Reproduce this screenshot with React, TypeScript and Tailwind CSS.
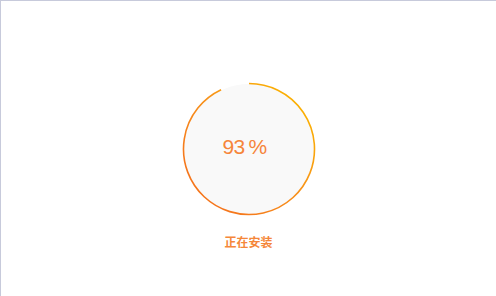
import React from 'react';

const progress = 93;

const ProgressRing: React.FC<{ value: number }> = ({ value }) => {
  const c = 67;
  const r = 65.5;
  const angle = (value / 100) * Math.PI * 2;
  const endX = c + r * Math.sin(angle);
  const endY = c - r * Math.cos(angle);
  const large = value > 50 ? 1 : 0;

  return (
    <svg width="134" height="134" viewBox="0 0 134 134">
      <defs>
        <linearGradient id="ring" gradientUnits="userSpaceOnUse" x1="125" y1="20" x2="30" y2="115">
          <stop offset="0" stopColor="#fbb300" />
          <stop offset="0.5" stopColor="#f7921a" />
          <stop offset="1" stopColor="#f5761c" />
        </linearGradient>
      </defs>
      <circle cx={c} cy={c} r="65" fill="#f9f9f9" />
      <path
        d={`M ${c} ${c - r} A ${r} ${r} 0 ${large} 1 ${endX} ${endY}`}
        fill="none"
        stroke="url(#ring)"
        strokeWidth="1.6"
      />
    </svg>
  );
};

const App: React.FC = () => {
  return (
    <div className="h-[296px] w-full bg-white border-t border-l border-[#c7cadb] font-['Liberation_Sans','Noto_Sans_CJK_SC',sans-serif]">
      <div className="flex flex-col items-center pt-[81px]">
        {/* 进度环 */}
        <div className="relative w-[134px] h-[134px]">
          <ProgressRing value={progress} />
          <div className="absolute inset-0 flex items-center justify-center pr-2 pb-1">
            <span className="text-[21px] font-light text-[#f6853a] tracking-tight">
              {progress}&thinsp;%
            </span>
          </div>
        </div>

        {/* 状态文字 */}
        <p className="mt-[18px] text-[12px] leading-[18px] font-semibold text-[#f5873a]">正在安装</p>
      </div>
    </div>
  );
};

export default App;
